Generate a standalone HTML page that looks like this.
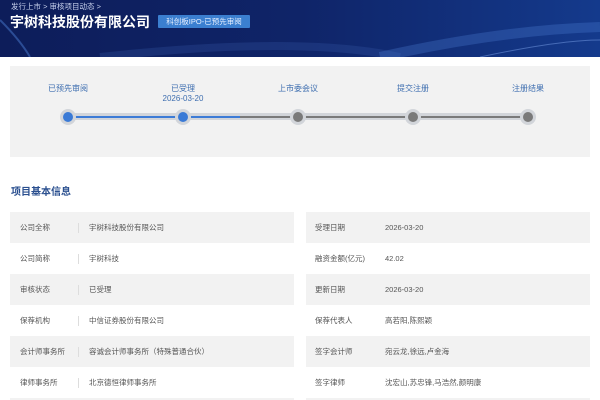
<!DOCTYPE html>
<html><head><meta charset="utf-8"><style>
*{margin:0;padding:0;box-sizing:border-box}
html,body{width:600px;height:400px;overflow:hidden}
body{background:#fff;font-family:"Liberation Sans","Noto Sans CJK SC",sans-serif;position:relative}
.hd{position:absolute;left:0;top:0;width:600px;height:57px;background:linear-gradient(90deg,#0d1d5a 0%,#0f2468 50%,#143a8c 100%);overflow:hidden}
.hd .bc{position:absolute;left:11px;top:1px;font-size:7.5px;color:#c8d2ee}
.hd .t{position:absolute;left:10px;top:13px;font-size:14px;line-height:18px;font-weight:bold;color:#fff}
.hd .tag{position:absolute;left:158px;top:15px;width:92px;height:13px;background:#3b7fd0;color:#e8f0ff;font-size:7.5px;line-height:13px;text-align:center;border-radius:1px}
.pn{position:absolute;left:10px;top:66px;width:580px;height:91px;background:#f2f2f2}
.lbl{position:absolute;font-size:8px;color:#3f6fb0;text-align:center;width:80px;line-height:10px}
.line{position:absolute;top:116px;height:2px}
.dot{position:absolute;width:16px;height:16px;border-radius:50%;top:109px;background:#d2d5da}
.dot i{position:absolute;left:3px;top:3px;width:10px;height:10px;border-radius:50%}
.st{position:absolute;left:11px;top:183px;font-size:10px;font-weight:bold;color:#2a4f8f}
.row{position:absolute;height:31px;font-size:7.5px;color:#555;line-height:31px}
.row.g{background:#f2f2f2}
.row span{position:absolute}
.row .d{position:absolute;left:68px;top:11px;width:1px;height:10px;background:#ddd}
</style></head><body>
<div class="hd">
<svg width="600" height="57" style="position:absolute;left:0;top:0"><path d="M0 20 Q20 40 30 57" stroke="#4a7bd0" stroke-width="2" fill="none" opacity=".5"/><path d="M100 57 Q300 35 400 57" stroke="#3a60b0" stroke-width="8" fill="none" opacity=".25"/><path d="M380 57 Q500 30 600 27" stroke="#4f80d8" stroke-width="10" fill="none" opacity=".3"/><path d="M480 57 Q560 40 600 40" stroke="#7aa0e8" stroke-width="1" fill="none" opacity=".5"/></svg>
<div class="bc">发行上市 &gt; 审核项目动态 &gt;</div>
<div class="t">宇树科技股份有限公司</div>
<div class="tag">科创板IPO-已预先审阅</div>
</div>
<div class="pn"></div>
<div class="lbl" style="left:28px;top:84px">已预先审阅</div>
<div class="lbl" style="left:143px;top:84px">已受理<br>2026-03-20</div>
<div class="lbl" style="left:258px;top:84px">上市委会议</div>
<div class="lbl" style="left:373px;top:84px">提交注册</div>
<div class="lbl" style="left:488px;top:84px">注册结果</div>
<div class="line" style="left:62px;width:472px;height:7px;top:113px;background:#d2d5da;border-radius:4px"></div>
<div class="line" style="left:68px;width:172px;background:#3c7bd6"></div>
<div class="line" style="left:240px;width:288px;background:#7a7a7a"></div>
<div class="dot" style="left:60px"><i style="background:#3a7ad6"></i></div>
<div class="dot" style="left:175px"><i style="background:#3a7ad6"></i></div>
<div class="dot" style="left:290px"><i style="background:#7a7a7a"></i></div>
<div class="dot" style="left:405px"><i style="background:#7a7a7a"></i></div>
<div class="dot" style="left:520px"><i style="background:#7a7a7a"></i></div>
<div class="st">项目基本信息</div>

<div class="row g" style="left:10px;top:212px;width:284px"><span style="left:10px">公司全称</span><div class="d"></div><span style="left:79px">宇树科技股份有限公司</span></div>
<div class="row g" style="left:306px;top:212px;width:284px"><span style="left:9px">受理日期</span><span style="left:79px">2026-03-20</span></div>
<div class="row" style="left:10px;top:243px;width:284px"><span style="left:10px">公司简称</span><div class="d"></div><span style="left:79px">宇树科技</span></div>
<div class="row" style="left:306px;top:243px;width:284px"><span style="left:9px">融资金额(亿元)</span><span style="left:79px">42.02</span></div>
<div class="row g" style="left:10px;top:274px;width:284px"><span style="left:10px">审核状态</span><div class="d"></div><span style="left:79px">已受理</span></div>
<div class="row g" style="left:306px;top:274px;width:284px"><span style="left:9px">更新日期</span><span style="left:79px">2026-03-20</span></div>
<div class="row" style="left:10px;top:305px;width:284px"><span style="left:10px">保荐机构</span><div class="d"></div><span style="left:79px">中信证券股份有限公司</span></div>
<div class="row" style="left:306px;top:305px;width:284px"><span style="left:9px">保荐代表人</span><span style="left:79px">高若阳,陈熙颖</span></div>
<div class="row g" style="left:10px;top:336px;width:284px"><span style="left:10px">会计师事务所</span><div class="d"></div><span style="left:79px">容诚会计师事务所（特殊普通合伙）</span></div>
<div class="row g" style="left:306px;top:336px;width:284px"><span style="left:9px">签字会计师</span><span style="left:79px">宛云龙,徐远,卢金海</span></div>
<div class="row" style="left:10px;top:367px;width:284px"><span style="left:10px">律师事务所</span><div class="d"></div><span style="left:79px">北京德恒律师事务所</span></div>
<div class="row" style="left:306px;top:367px;width:284px"><span style="left:9px">签字律师</span><span style="left:79px">沈宏山,苏忠锋,马浩然,颜明康</span></div>
<div class="row g" style="left:10px;top:398px;width:284px;height:2px"></div>
<div class="row g" style="left:306px;top:398px;width:284px;height:2px"></div>
</body></html>
